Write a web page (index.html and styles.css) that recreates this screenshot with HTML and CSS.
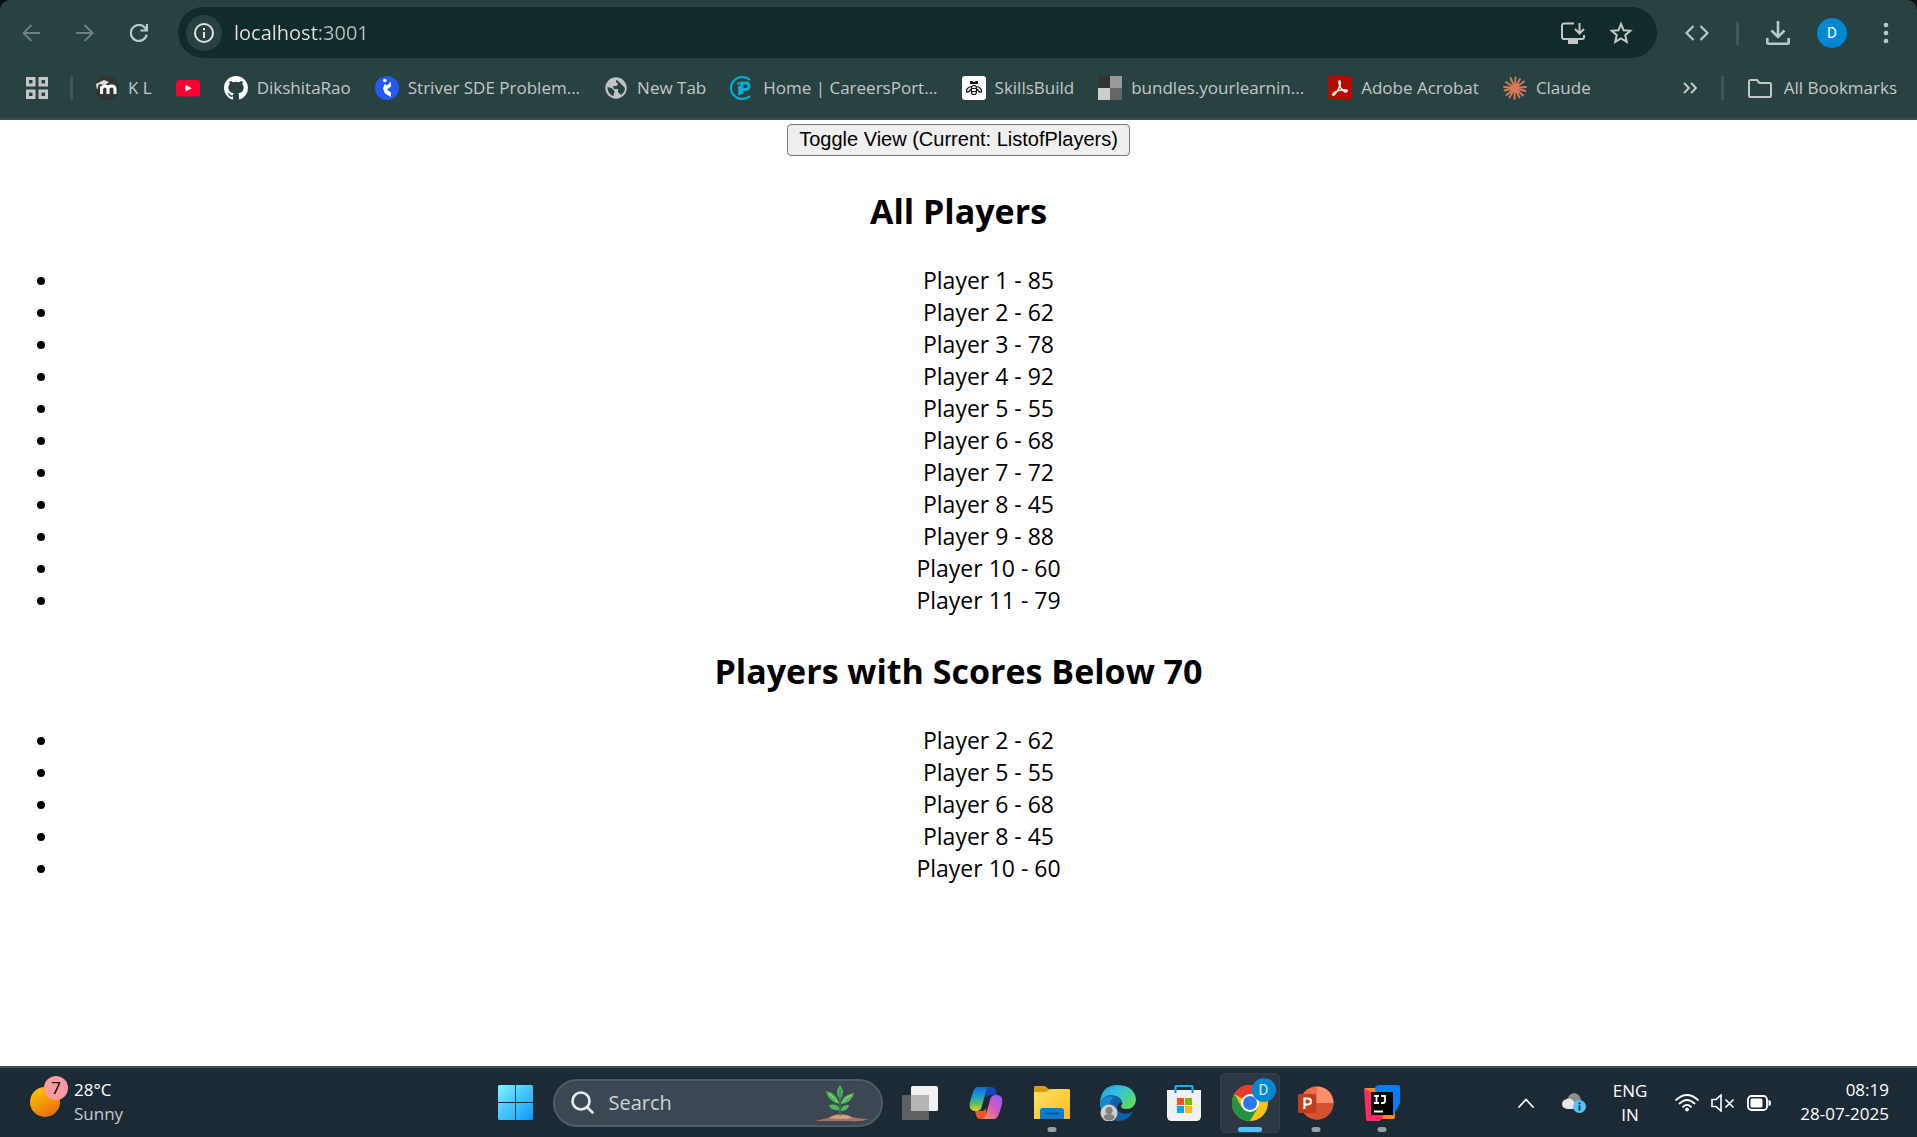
FILE: index.html
```html
<!DOCTYPE html>
<html lang="en">
<head>
<meta charset="utf-8">
<meta name="viewport" content="width=device-width, initial-scale=1">
<title>localhost:3001</title>
<link rel="stylesheet" href="styles.css">
</head>
<body>
<header class="browser">
  <div class="browser-frame">
    <div class="toolbar">
      <nav class="nav-buttons" aria-label="History">
        <button class="icon-btn dim" aria-label="Back"><svg width="18" height="18" viewBox="0 0 18 18" fill="none" stroke="currentColor" stroke-width="2"><path d="M18 9H1.5M9.5 1 1.5 9l8 8"/></svg></button>
        <button class="icon-btn dim" aria-label="Forward"><svg width="18" height="18" viewBox="0 0 18 18" fill="none" stroke="currentColor" stroke-width="2"><path d="M0 9h16.500M8.500 1l8 8-8 8"/></svg></button>
        <button class="icon-btn" aria-label="Reload"><svg width="18" height="18" viewBox="0 0 18 18" fill="none" stroke="currentColor" stroke-width="2.200"><path d="M16.700 10.500A8 8 0 1 1 15 3.800l1.600 2M17 0v6.500h-6.500"/></svg></button>
      </nav>
      <div class="omnibox">
        <button class="site-info" aria-label="Site information"><svg width="20" height="20" viewBox="0 0 20 20" fill="none" stroke="currentColor" stroke-width="2"><circle cx="10" cy="10" r="9"/><path d="M10 9v6M10 5v2.200"/></svg></button>
        <input class="address" type="text" aria-label="Address" value="localhost:3001" spellcheck="false">
        <button class="icon-btn box" aria-label="Install app"><svg width="24" height="22" viewBox="0 0 24 22" fill="none" stroke="currentColor" stroke-width="2"><path d="M13 1.500H3a2 2 0 0 0-2 2V15a2 2 0 0 0 2 2h18a2 2 0 0 0 2-2v-2M18.500 1v9.500M14 7l4.500 4.500L23 7"/><path d="M8 19h8v2H8z" fill="currentColor"/></svg></button>
        <button class="icon-btn box" aria-label="Bookmark this tab"><svg width="24" height="24" viewBox="0 0 24 24" fill="none" stroke="currentColor" stroke-width="2"><path d="m12 3 2.600 6.200 6.700.6-5.100 4.400 1.600 6.600L12 17.300l-5.800 3.500 1.600-6.600-5.100-4.400 6.700-.6z"/></svg></button>
      </div>
      <div class="actions">
        <button class="icon-btn" aria-label="Developer tools"><svg width="24" height="16" viewBox="0 0 24 16" fill="none" stroke="currentColor" stroke-width="2.200"><path d="M8.500 1 1.500 8l7 7M15.500 1l7 7-7 7"/></svg></button>
        <span class="separator"></span>
        <button class="icon-btn" aria-label="Downloads"><svg width="24" height="24" viewBox="0 0 24 24" fill="none" stroke="currentColor" stroke-width="2.600"><path d="M12 0v15M5.500 9.500 12 16l6.500-6.500M1.300 17v4.500q0 1.200 1.200 1.200h19q1.200 0 1.200-1.200V17"/></svg></button>
        <button class="avatar" aria-label="Profile">D</button>
        <button class="icon-btn" aria-label="Menu"><svg width="6" height="22" viewBox="0 0 6 22" fill="currentColor"><circle cx="3" cy="3" r="2.300"/><circle cx="3" cy="11" r="2.300"/><circle cx="3" cy="19" r="2.300"/></svg></button>
      </div>
    </div>
    <nav class="bookmarks" aria-label="Bookmarks">
      <button class="bookmark" aria-label="Apps"><svg width="22" height="22" viewBox="0 0 22 22" fill="none" stroke="currentColor" stroke-width="3"><path d="M1.500 1.500h6.500v6.500H1.500zM14 1.500h6.500v6.500H14zM1.500 14h6.500v6.500H1.500zM14 14h6.500v6.500H14z"/></svg></button>
      <span class="separator tight"></span>
      <a class="bookmark" href="#"><svg width="24" height="24" viewBox="0 0 24 24"><circle cx="12" cy="12" r="12" fill="#333"/><path d="M6.500 18V10.500M13 18v-5q0-3-3-3t-3 3M13 18v-5q0-3 3.500-3t3.500 3v5" fill="none" stroke="#fff" stroke-width="3"/><path d="M1 8 9 4l5 2-4 3-6-1-2 6z" fill="#ddd"/></svg>K L</a>
      <a class="bookmark" href="#" aria-label="YouTube"><svg width="24" height="24" viewBox="0 0 24 24"><rect y="4" width="24" height="16.500" rx="3.500" fill="#ff0033"/><path d="m9.500 8.800 6.200 3.400-6.200 3.400z" fill="#fff"/></svg></a>
      <a class="bookmark" href="#"><svg width="24" height="24" viewBox="0 0 16 16" fill="#fff"><path d="M8 0C3.580 0 0 3.580 0 8c0 3.540 2.290 6.530 5.470 7.590.4.070.55-.17.55-.38 0-.19-.01-.82-.01-1.490-2.010.37-2.530-.49-2.690-.94-.09-.23-.48-.94-.82-1.130-.28-.15-.68-.52-.01-.53.63-.01 1.080.58 1.230.82.72 1.210 1.870.87 2.330.66.07-.52.28-.87.51-1.070-1.780-.2-3.640-.89-3.640-3.950 0-.87.31-1.590.82-2.150-.08-.2-.36-1.020.08-2.120 0 0 .67-.21 2.200.82a7.600 7.600 0 0 1 4 0c1.530-1.040 2.200-.82 2.200-.82.44 1.100.16 1.920.08 2.120.51.56.82 1.270.82 2.150 0 3.070-1.870 3.750-3.650 3.950.29.25.54.73.54 1.480 0 1.070-.01 1.930-.01 2.200 0 .21.15.46.55.38A8 8 0 0 0 16 8c0-4.420-3.580-8-8-8z"/></svg>DikshitaRao</a>
      <a class="bookmark" href="#"><svg width="24" height="24" viewBox="0 0 24 24"><circle cx="12" cy="12" r="12" fill="#2559f4"/><circle cx="9.800" cy="4.500" r="1.800" fill="#fff"/><path d="m9.500 8 2.500 1.500L16 5.500v5l-4 3 4 3v4.500l-6-3.500-2-5z" fill="#fff"/></svg>Striver SDE Problem...</a>
      <a class="bookmark" href="#"><svg width="24" height="24" viewBox="0 0 24 24"><circle cx="12" cy="12" r="10.700" fill="#bfc3c5"/><path d="M13 4c-2 1-1 3 1 3l-1 3H9l1 3h4v3l3 3c3-2 4-5 4-7M3.500 11l4 1 3 3-1 5c-4-1-6-5-6-9z" fill="#284141"/></svg>New Tab</a>
      <a class="bookmark" href="#"><svg width="24" height="24" viewBox="0 0 24 24" fill="none" stroke="#08aed6"><path d="M20 4Q17 1 12 1a11 11 0 1 0 0 22q5 0 8-3" stroke-width="2"/><path d="M9.500 10v9M12 18V7h4q3 0 3 3.200T16 13.500h-4" stroke-width="2.800"/><path d="M7 7.500h5" stroke-width="2"/></svg>Home | CareersPort...</a>
      <a class="bookmark" href="#"><svg width="24" height="24" viewBox="0 0 24 24"><rect width="24" height="24" rx="3" fill="#fff"/><g fill="none" stroke="#111" stroke-width="1.200"><rect x="9.500" y="9.500" width="5" height="9" rx="2.500"/><path d="M9.500 12.500h5M9.500 15.500h5M9 10.500Q4 12 4.500 16q3 .5 4.200-3M15 10.500q5 1.500 4.500 5.500-3 .5-4.200-3"/></g><path d="M8 5h2l2 1 2-1h2v3H8z" fill="#111"/></svg>SkillsBuild</a>
      <a class="bookmark" href="#"><svg width="24" height="24" viewBox="0 0 24 24"><path fill="#333" d="M0 0h12v12H0z"/><path fill="#999" d="M12 0h12v12H12z"/><path fill="#ccc" d="M0 12h12v12H0z"/><path fill="#666" d="M12 12h12v12H12z"/></svg>bundles.yourlearnin...</a>
      <a class="bookmark" href="#"><svg width="24" height="24" viewBox="0 0 24 24"><rect width="24" height="24" rx="4" fill="#b30b00"/><path d="M11.500 9Q10 5 11.500 5t.5 4q-1 5-5 9-2 2-2.300.8T7 16q5-2.500 10-2.300 3 .3 2 1.600t-3-.2q-4-3-4.500-6.100z" fill="none" stroke="#fff" stroke-width="1.400"/></svg>Adobe Acrobat</a>
      <a class="bookmark" href="#"><svg width="24" height="24" viewBox="0 0 24 24" stroke="#d97757" stroke-width="1.900" stroke-linecap="round"><path d="M12 12 12.500 1.500M12 12l5-9M12 12l9-6.500M12 12l11-1M12 12l10.500 3M12 12l8 7.500M12 12l4.500 9.500M12 12l-.5 11M12 12l-5.500 9.500M12 12l-8.500 7M12 12 1.500 14.500M12 12 1 11M12 12 3 6M12 12 7.500 2"/></svg>Claude</a>
      <button class="bookmark overflow" aria-label="More bookmarks"><svg width="14" height="12" viewBox="0 0 14 12" fill="none" stroke="currentColor" stroke-width="2"><path d="m1 1 5 5-5 5M8 1l5 5-5 5"/></svg></button>
      <span class="separator"></span>
      <button class="bookmark all"><svg width="24" height="24" viewBox="0 0 24 24" fill="none" stroke="currentColor" stroke-width="2"><path d="M2.500 4H9l2.500 3h10q1.500 0 1.500 1.500v11q0 1.500-1.500 1.500h-19Q1 21 1 19.500v-14Q1 4 2.500 4z"/></svg>All Bookmarks</button>
    </nav>
  </div>
</header>

<main class="page">
  <div class="toggle"><button class="toggle-btn">Toggle View (Current: ListofPlayers)</button></div>
  <h2>All Players</h2>
  <ul>
    <li>Player 1 - 85</li>
    <li>Player 2 - 62</li>
    <li>Player 3 - 78</li>
    <li>Player 4 - 92</li>
    <li>Player 5 - 55</li>
    <li>Player 6 - 68</li>
    <li>Player 7 - 72</li>
    <li>Player 8 - 45</li>
    <li>Player 9 - 88</li>
    <li>Player 10 - 60</li>
    <li>Player 11 - 79</li>
  </ul>
  <h2>Players with Scores Below 70</h2>
  <ul>
    <li>Player 2 - 62</li>
    <li>Player 5 - 55</li>
    <li>Player 6 - 68</li>
    <li>Player 8 - 45</li>
    <li>Player 10 - 60</li>
  </ul>
</main>

<footer class="taskbar">
  <button class="weather">
    <span class="sun"><span class="badge">7</span></span>
    <span class="weather-text"><span>28°C</span><span class="muted">Sunny</span></span>
  </button>
  <div class="apps">
    <button class="app" aria-label="Start"><svg width="36" height="36" viewBox="0 0 36 36"><defs><linearGradient id="win" x1="0" y1="0" x2="36" y2="36" gradientUnits="userSpaceOnUse"><stop stop-color="#7df2ff"/><stop offset="1" stop-color="#0a94fb"/></linearGradient></defs><path fill="url(#win)" d="M1 0h16v17H0V1zM18 0h16l1 1v16H18zM0 18h17v17H1l-1-1zM18 18h17v16l-1 1H18z"/></svg></button>
    <label class="search">
      <svg width="24" height="24" viewBox="0 0 24 24" fill="none" stroke="#e8ebed" stroke-width="2.600" stroke-linecap="round"><circle cx="10" cy="10" r="8.500"/><path d="m16.500 16.500 5 5"/></svg>
      <input type="search" placeholder="Search" aria-label="Search">
      <svg width="54" height="38" viewBox="0 0 54 38"><path d="M0 37q8-2 13-3 6-4 13-4 6 0 11 3 8 2 17 2-8 3-18 2z" fill="#a8735a"/><path d="M14 34q8-4 14-3 6 0 9 3-8 2-23 0z" fill="#d4a083"/><g fill="#52b35a"><path d="M25 16q-6-8 0-15 6 7 0 15z"/><path d="M24 20Q13 17 11 7q11 2 13 13zM26 20q1-9 13-11-2 10-13 11z"/><path d="M25 26q-10 1-11-5 9-2 11 5zM26 27q0-7 8-6-1 6-8 6z"/></g><path d="M25 5v27" stroke="#2f8c43" stroke-width="1.500"/><path d="M14 10q7 4 9 9M36 11q-6 3-9 8" fill="none" stroke="#9ade87"/></svg>
    </label>
    <button class="app" aria-label="Task view"><svg width="36" height="36" viewBox="0 0 36 36"><rect y="10" width="27" height="25" rx="1.500" fill="#5e6062"/><rect x="9" y="1" width="27" height="25" rx="1.500" fill="#f1f1f1"/><path d="M9 10h18v16H9z" fill="#b5b5b5"/></svg></button>
    <button class="app" aria-label="Copilot"><svg width="34" height="34" viewBox="0 0 34 34"><defs><linearGradient id="cpa" x1="0" y1="0" x2="0" y2="1"><stop stop-color="#1667dc"/><stop offset=".4" stop-color="#18a1cf"/><stop offset=".7" stop-color="#5cc05a"/><stop offset="1" stop-color="#f2cf2a"/></linearGradient><linearGradient id="cpb" x1="1" y1="0" x2="0" y2="1"><stop stop-color="#8a62ff"/><stop offset=".45" stop-color="#d455c9"/><stop offset="1" stop-color="#ff9a4d"/></linearGradient></defs><path d="M16 1h7q3 0 4 4l1 4h-7q-3 0-4 3z" fill="#1047ba"/><path d="M18 33h-7q-3 0-4-4l-1-4h7q3 0 4-3z" fill="#f2562e"/><path d="M9 1h12q-3 0-4 4l-4 15q-1 5-6 5-8 0-6-9L4 6q2-5 5-5z" fill="url(#cpa)"/><path d="M25 33H13q3 0 4-4l4-15q1-5 6-5 8 0 6 9l-3 10q-2 5-5 5z" fill="url(#cpb)"/></svg></button>
    <button class="app running" aria-label="File Explorer"><svg width="36" height="34" viewBox="0 0 36 34"><defs><linearGradient id="fld" x1="0" y1="0" x2="1" y2="1"><stop stop-color="#ffe169"/><stop offset="1" stop-color="#fdbb1c"/></linearGradient></defs><path d="M0 1q0-1 1-1h10l5 4-4 5H0z" fill="#dd9a05"/><path d="M0 6h12l4-3h19l1 1v29H0z" fill="url(#fld)"/><path d="M6 33v-8q0-3 3-3h18q3 0 3 3v8z" fill="#1279cf"/><path d="M11 27.500h14" stroke="#0b4d91" stroke-width="1.500"/></svg></button>
    <button class="app" aria-label="Edge"><svg width="36" height="36" viewBox="0 0 36 36"><defs><linearGradient id="edg" x1="0" y1="0" x2="1" y2=".7"><stop stop-color="#1f9be2"/><stop offset=".5" stop-color="#35c4d8"/><stop offset="1" stop-color="#5fdd58"/></linearGradient></defs><path d="M0 18Q1 8 13 9q9 1 9 8-7 3-4 9 5 5 15 1-5 9-15 9Q2 35 0 18z" fill="#1260ab"/><path d="M0 18Q1 0 18 0q17 1 18 15-1 9-10 9-5 0-5-3 2-2 1-5-3-6-11-6Q3 10 0 18z" fill="url(#edg)"/><path d="M14 12Q4 20 14 34q-14-4-14-16 4-9 14-6z" fill="#1789cf"/><circle cx="9" cy="28" r="8.500" fill="#d0cecb"/><circle cx="9" cy="25.500" r="3.500" fill="#85817d"/><path d="M3.500 33q0-4 5.500-4t5.500 4q-5 5-11 0z" fill="#85817d"/></svg></button>
    <button class="app" aria-label="Microsoft Store"><svg width="36" height="36" viewBox="0 0 36 36"><path d="M9.500 8V2q0-1 1-1h15q1 0 1 1v6" fill="none" stroke="#27a9e8" stroke-width="2.200"/><path d="M1 5h34v26q0 5-5 5H6q-5 0-5-5z" fill="#f1f1f1"/><path d="M9.500 5v3M26.500 5v3" stroke="#1587c9" stroke-width="2"/><path fill="#f25022" d="M11 13h7v7h-7z"/><path fill="#7fba00" d="M19 13h7v7h-7z"/><path fill="#00a4ef" d="M11 21h7v7h-7z"/><path fill="#ffb900" d="M19 21h7v7h-7z"/></svg></button>
    <button class="app active" aria-label="Chrome"><svg width="36" height="36" viewBox="0 0 36 36"><circle cx="18" cy="18" r="18" fill="#fbc116"/><path d="M18 18 2.400 9A18 18 0 0 1 33.600 9H18z" fill="#e33b2e"/><path d="M2.400 9A18 18 0 0 0 18 36l8-13.500-8-4.500-8 4.500z" fill="#229342"/><circle cx="18" cy="18" r="9" fill="#fff"/><circle cx="18" cy="18" r="7" fill="#2f78ec"/></svg><span class="app-badge">D</span></button>
    <button class="app running" aria-label="PowerPoint"><svg width="36" height="34" viewBox="0 0 36 34"><circle cx="19" cy="17" r="16.500" fill="#e35a3b"/><path d="M19 .5A16.500 16.500 0 0 1 35.500 17H19z" fill="#ff8f6b"/><path d="M35.500 17a16.500 16.500 0 0 1-33 0z" fill="#d35230"/><path d="M2.500 17A16.500 16.500 0 0 1 19 .5V17z" fill="#ed6c47"/><rect y="8" width="18" height="19" rx="1.500" fill="#c43e1c"/><path d="M6.500 23V12.500h3q3.500 0 3.500 3t-3.500 3h-3" fill="none" stroke="#fff" stroke-width="2.200"/></svg></button>
    <button class="app running" aria-label="IntelliJ IDEA"><svg width="36" height="36" viewBox="0 0 36 36"><path d="M0 5q0-2 2-2h9l20 20v9q0 2-2 2H14z" fill="#ff8a1f"/><path d="M0 4 12 9v19l8 2-4 6q-1 1-2 1H5q-2 0-3-3z" fill="#ff2b62"/><path d="M11 3q1-3 4-3h19q2 0 2 2v16l-7 13-17-20z" fill="#087cfa"/><path d="M7 7h22v23H7z"/><path d="M10 11h5M12.500 11v7M10 18h5M17 11h4v5q0 2-2 2h-2M10 26.500h9" fill="none" stroke="#fff" stroke-width="1.800"/></svg></button>
  </div>
  <div class="tray">
    <button class="tray-btn" aria-label="Show hidden icons"><svg width="16" height="10" viewBox="0 0 16 10" fill="none" stroke="#fff" stroke-width="1.800" stroke-linecap="round"><path d="m1 9 7-7.500L15 9"/></svg></button>
    <button class="tray-btn cloud" aria-label="OneDrive"><svg width="25" height="20" viewBox="0 0 25 20"><path d="M5 6Q8 0 12 0q6 1 7 7l-4 6z" fill="#8b8d90"/><path d="M5 16q-5-1-5-5 0-4 5-5 5-2 7 3l6 7z" fill="#e5e5e5"/><circle cx="17.500" cy="13.500" r="6.500" fill="#55c3f7"/><path d="M17.500 12.500v5M17.500 9.500v1.800" stroke="#123" stroke-width="1.800"/></svg></button>
    <button class="tray-btn lang">ENG<br>IN</button>
    <button class="tray-btn status" aria-label="Network, volume and battery">
      <svg width="24" height="18" viewBox="0 0 24 18" fill="none" stroke="#fff" stroke-width="1.800" stroke-linecap="round"><path d="M1 6Q12-4 23 6M4.500 9.500q7.500-7 15 0M8 12.800q4-4 8 0"/><circle cx="12" cy="15.500" r="1.500" fill="#fff" stroke-width="1"/></svg>
      <svg width="24" height="18" viewBox="0 0 24 18" fill="none" stroke="#fff" stroke-width="1.600"><path d="M1 5.500h4L10 1v16l-5-4.500H1zM14.500 5.500l8 8M22.500 5.500l-8 8"/></svg>
      <svg width="24" height="18" viewBox="0 0 24 18"><rect x="1" y="2" width="19" height="14" rx="3.500" fill="none" stroke="#fff" stroke-width="1.800"/><rect x="3.500" y="4.500" width="12" height="9" rx="1.500" fill="#fff"/><path d="M21.500 6q2.500 0 2.500 3t-2.500 3z" fill="#fff"/></svg>
    </button>
    <button class="tray-btn clock">08:19<br>28-07-2025</button>
  </div>
</footer>
</body>
</html>
```

FILE: styles.css
```css
* { box-sizing: border-box; }

body {
  margin: 0;
  min-height: 100vh;
  display: flex;
  flex-direction: column;
  background: #fff;
  color: #000;
  font: 23px/32px "Open Sans", "Noto Sans", sans-serif;
}

button {
  margin: 0;
  padding: 0;
  border: 0;
  background: none;
  color: inherit;
  font: inherit;
}

input {
  border: 0;
  padding: 0;
  outline: 0;
  background: none;
  font: inherit;
}

svg { display: block; flex: none; }

/* Browser chrome */
.browser { background: #0b1213; }

.browser-frame {
  height: 120px;
  padding-top: 7px;
  border-bottom: 2px solid #414a4a;
  border-radius: 10px 10px 0 0;
  background: #284141;
  color: #c4c7c7;
  font-size: 17px;
}

.toolbar {
  display: flex;
  align-items: center;
  height: 51px;
  padding-right: 4px;
}

.nav-buttons { display: flex; padding: 0 12px 0 4px; }

.icon-btn {
  display: grid;
  place-items: center;
  width: 54px;
  height: 48px;
  color: #b1cdcb;
}

.icon-btn.dim { color: #6d8180; }
.icon-btn.box { width: 48px; color: #c4c7c7; }

.omnibox {
  flex: 1;
  display: flex;
  align-items: center;
  height: 51px;
  padding: 0 12px 0 8px;
  border-radius: 26px;
  background: #112a2a;
}

.site-info {
  display: grid;
  place-items: center;
  width: 36px;
  height: 36px;
  border-radius: 50%;
  background: #284141;
  color: #e3e3e3;
}

.address {
  flex: 1;
  min-width: 0;
  margin-left: 12px;
  background: linear-gradient(90deg, #e3e3e3 84px, #b9c1c1 84px) text;
  color: transparent;
  font-size: 20px;
}

.actions { display: flex; align-items: center; padding-left: 13px; }
.actions .separator { margin: 0 12px; }

.separator {
  width: 3px;
  height: 24px;
  border-radius: 2px;
  background: #42595a;
}

.avatar {
  width: 30px;
  height: 30px;
  margin: 0 12px;
  border-radius: 50%;
  background: #0288d1;
  color: #fff;
  font: 15px/30px Roboto, sans-serif;
}

.bookmarks {
  display: flex;
  align-items: center;
  gap: 24px;
  height: 60px;
  padding: 0 20px 0 26px;
}

.bookmark {
  display: flex;
  align-items: center;
  gap: 9px;
  color: inherit;
  line-height: 24px;
  text-decoration: none;
  white-space: nowrap;
}

.tight { margin: 0 -2px; }
.overflow { margin-left: auto; }
.all { gap: 12px; }

/* Page */
.page { flex: 1; text-align: center; }

.toggle { display: flex; justify-content: center; padding-top: 4px; }

.toggle-btn {
  height: 32px;
  padding: 0 11px 2px;
  border: 1px solid #767676;
  border-radius: 4px;
  background: #efefef;
  font: 20px/28px "Liberation Sans", Arial, sans-serif;
}

h2 {
  margin: 31px 0 29px;
  font-size: 34px;
  line-height: 48px;
}

ul { margin: 0; padding-left: 60px; }

/* Taskbar */
.taskbar {
  display: grid;
  grid-template-columns: 1fr auto 1fr;
  align-items: center;
  height: 71px;
  border-top: 2px solid #3d4d50;
  background: #1c2a36;
  color: #fff;
  font-size: 17px;
  line-height: 24px;
}

.weather {
  display: flex;
  align-items: center;
  gap: 14px;
  padding: 0 0 2px 30px;
  text-align: left;
}

.sun {
  position: relative;
  width: 30px;
  height: 30px;
  border-radius: 50%;
  background: linear-gradient(150deg, #ffd000, #e95f0b);
}

.badge {
  position: absolute;
  top: -11px;
  right: -8px;
  width: 24px;
  height: 24px;
  border-radius: 50%;
  background: #ff99a4;
  color: #000;
  font-size: 17px;
  text-align: center;
}

.weather-text { display: flex; flex-direction: column; }
.muted { color: #c3c8cc; }

.apps { display: flex; align-items: center; padding-right: 20px; }

.app {
  position: relative;
  display: grid;
  place-items: center;
  width: 60px;
  height: 60px;
  margin: 0 3px;
  border-radius: 6px;
}

.active { background: #2c3945; box-shadow: inset 0 0 0 1px #35424d; }

.running::after,
.active::after {
  content: "";
  position: absolute;
  bottom: 1px;
  left: 50%;
  width: 9px;
  height: 5px;
  border-radius: 3px;
  background: #959ca2;
  transform: translateX(-50%);
}

.active::after { width: 24px; background: #4cc2ff; }

.app-badge {
  position: absolute;
  top: 5px;
  right: 4px;
  width: 24px;
  height: 24px;
  border-radius: 50%;
  background: #0288d1;
  color: #d4ecfa;
  font: 15px/24px Roboto, sans-serif;
}

.search {
  display: flex;
  align-items: center;
  width: 330px;
  height: 48px;
  margin: 0 4px;
  padding: 0 12px 0 16px;
  border: 2px solid #4f5b65;
  border-radius: 24px;
  background: #3b4853;
}

.search input {
  flex: 1;
  min-width: 0;
  margin-left: 14px;
  color: #fff;
  font-size: 20px;
}

.search input::placeholder { color: #ced2d5; opacity: 1; }

.tray {
  display: flex;
  justify-content: flex-end;
  align-items: center;
  padding-right: 28px;
}

.tray-btn { line-height: 24px; }
.cloud { margin-left: 28px; }
.lang { margin: 0 28px 0 26px; }
.status { display: flex; gap: 12px; }
.clock { margin-left: 29px; padding-bottom: 2px; text-align: right; }
```
